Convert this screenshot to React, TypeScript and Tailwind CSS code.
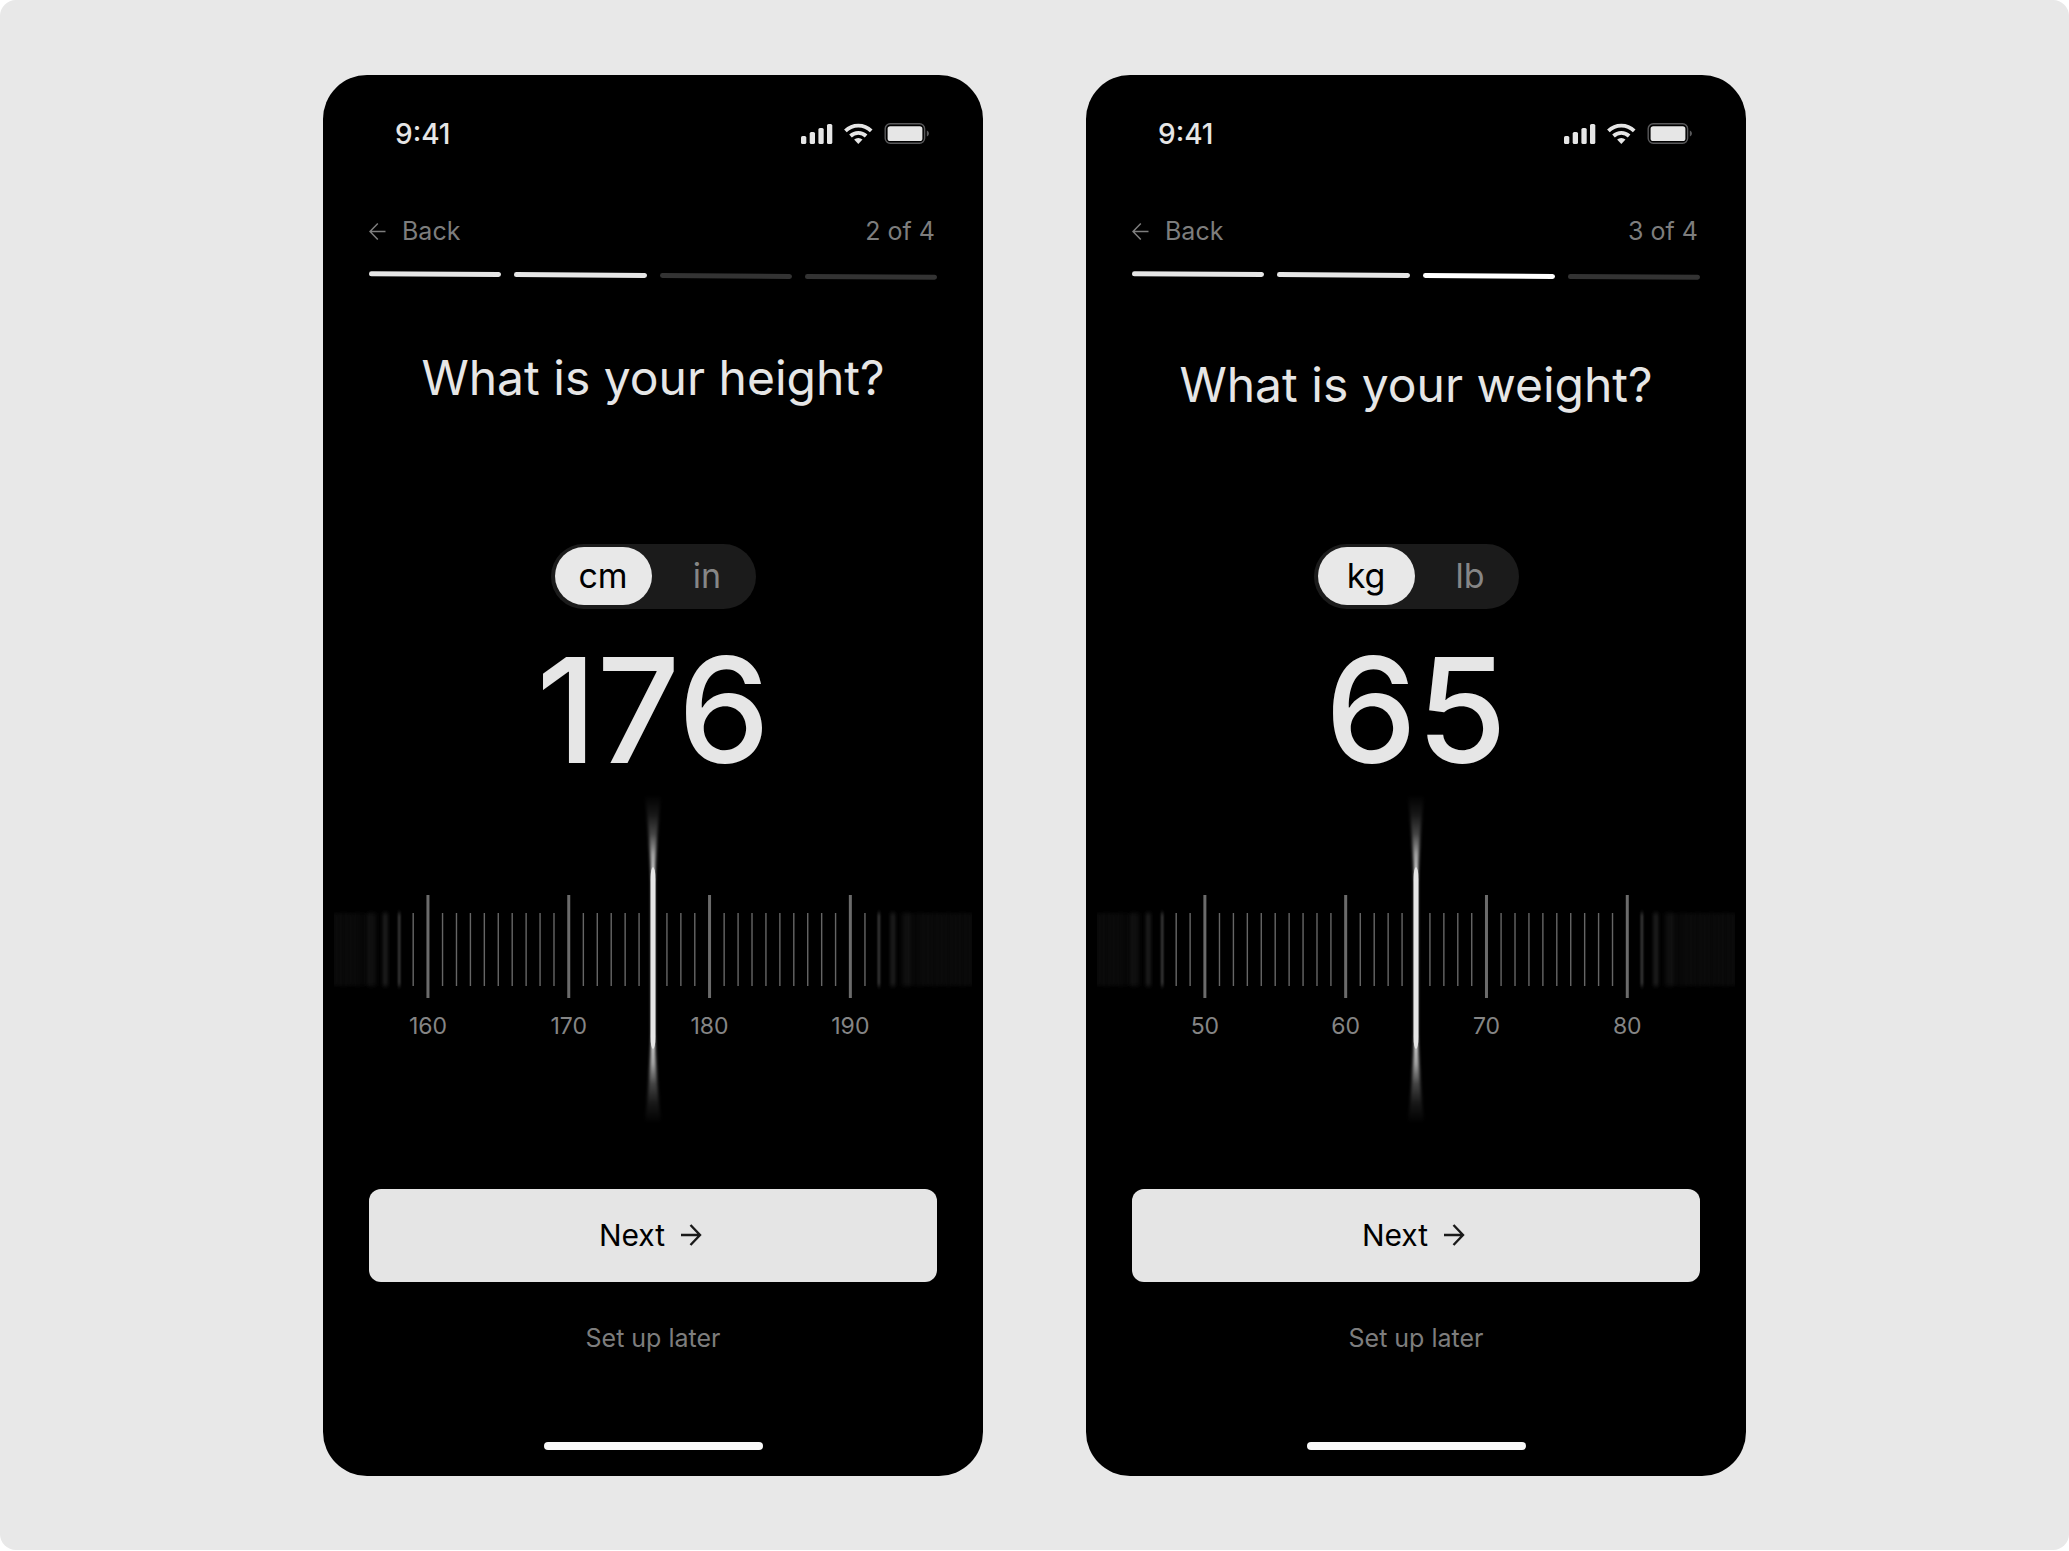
import { useState } from 'react';

interface StepProps {
  step: number;
  question: string;
  units: string[];
  initialValue: number;
  min: number;
  max: number;
  headingClass: string;
}

const TOTAL_STEPS = 4;
const CENTER = 330;

// distance in px from the zero mark, the marks next to a major one sit a bit wider
const offsetOf = (v: number) => {
  const rest = v % 10;
  const base = ((v - rest) / 10) * 140.8;
  return rest === 0 ? base : base + 14.6 + 13.93 * (rest - 1);
};

function StatusBar() {
  return (
    <div className="flex items-center justify-between pt-10 pl-[72px] pr-[54px]">
      <span className="text-[28px] leading-[38px] font-medium">9:41</span>
      <svg width="128" height="22" viewBox="0 0 128 22" fill="currentColor" aria-hidden="true">
        <rect x="0" y="13" width="5.3" height="8" rx="1.6" />
        <rect x="8.7" y="9" width="5.3" height="12" rx="1.6" />
        <rect x="17.4" y="5" width="5.3" height="16" rx="1.6" />
        <rect x="26" y="1" width="5.3" height="20" rx="1.6" />
        <g fill="none" stroke="currentColor" strokeWidth="3.8">
          <path d="M44.4 7.8a18.6 18.6 0 0 1 25.8 0" />
          <path d="M49.5 13a11.4 11.4 0 0 1 15.6 0" />
        </g>
        <path d="M57.3 21l-4.2-4.4a6.4 6.4 0 0 1 8.4 0z" />
        <rect x="84.2" y="0.8" width="39.4" height="19.4" rx="5" fill="none" stroke="#59595b" strokeWidth="1.4" />
        <rect x="86.6" y="3.2" width="34.8" height="14.8" rx="2.6" />
        <path d="M125.8 7.6c2.8 1.2 2.8 4.8 0 6z" fill="#59595b" />
      </svg>
    </div>
  );
}

function Ruler({ id, value, min, max, onChange, label }: {
  id: string;
  value: number;
  min: number;
  max: number;
  onChange: (v: number) => void;
  label: string;
}) {
  const ticks = [];
  for (let v = value - 26; v <= value + 26; v++) {
    ticks.push({ v, x: CENTER + offsetOf(v) - offsetOf(value), major: v % 10 === 0 });
  }

  // the outer ticks get blurrier the closer they are to the edge, the right fade starts earlier
  const blurOf = (x: number) => {
    const d = x < CENTER ? CENTER - x : x - CENTER + 22;
    if (d < 242) return undefined;
    if (d < 256) return `url(#${id}-b1)`;
    if (d < 270) return `url(#${id}-b2)`;
    if (d < 284) return `url(#${id}-b3)`;
    return `url(#${id}-b4)`;
  };

  return (
    <div className="relative">
      <svg viewBox="0 0 660 340" className="block w-full" aria-hidden="true">
        <defs>
          {[1.3, 2.2, 3.5, 7].map((s, i) => (
            <filter key={s} id={`${id}-b${i + 1}`} filterUnits="userSpaceOnUse" x="-60" y="90" width="780" height="140">
              <feGaussianBlur stdDeviation={`${s} 2`} />
            </filter>
          ))}
          <clipPath id={`${id}-clip`}>
            <rect x="11" y="0" width="638" height="340" />
          </clipPath>
          <linearGradient id={`${id}-glow`} x1="0" y1="0" x2="0" y2="1">
            <stop offset="0" stopColor="#e6e6e6" stopOpacity="0" />
            <stop offset="0.06" stopColor="#e6e6e6" stopOpacity="0.1" />
            <stop offset="0.12" stopColor="#e6e6e6" stopOpacity="0.3" />
            <stop offset="0.18" stopColor="#e6e6e6" stopOpacity="0.7" />
            <stop offset="0.24" stopColor="#e6e6e6" stopOpacity="1" />
            <stop offset="0.76" stopColor="#e6e6e6" stopOpacity="1" />
            <stop offset="0.82" stopColor="#e6e6e6" stopOpacity="0.7" />
            <stop offset="0.88" stopColor="#e6e6e6" stopOpacity="0.3" />
            <stop offset="0.94" stopColor="#e6e6e6" stopOpacity="0.1" />
            <stop offset="1" stopColor="#e6e6e6" stopOpacity="0" />
          </linearGradient>
          <filter id={`${id}-soft`} filterUnits="userSpaceOnUse" x="300" y="0" width="60" height="340">
            <feGaussianBlur stdDeviation="1.5 1" />
          </filter>
        </defs>

        <g clipPath={`url(#${id}-clip)`}>
          {ticks.map((t) => (
            <rect
              key={t.v}
              x={t.x - (t.major ? 1.5 : 0.7)}
              y={t.major ? 104 : 122}
              width={t.major ? 3 : 1.4}
              height={t.major ? 103 : 73}
              fill={t.major ? '#6b6b6b' : '#666666'}
              filter={blurOf(t.x)}
            />
          ))}
        </g>

        {ticks.filter((t) => t.major && Math.abs(t.x - CENTER) < 250).map((t) => (
          <text key={t.v} x={t.x} y="243" textAnchor="middle" fill="#858585" className="text-[23px]">
            {t.v}
          </text>
        ))}

        {/* Needle, a flare fading out above and below the solid line */}
        <path
          d="M322 4H338Q333 50 331.5 92V242Q333 286 338 332H322Q327 286 328.5 242V92Q327 50 322 4Z"
          fill={`url(#${id}-glow)`}
          filter={`url(#${id}-soft)`}
        />
        <rect x="327.5" y="76" width="5" height="182" rx="2.5" ry="12" fill="#e6e6e6" />
      </svg>
      <input
        type="range"
        aria-label={label}
        min={min}
        max={max}
        value={value}
        onChange={(e) => onChange(Number(e.target.value))}
        className="absolute inset-0 w-full h-full opacity-0 cursor-pointer"
      />
    </div>
  );
}

function StepScreen({ step, question, units, initialValue, min, max, headingClass }: StepProps) {
  const [unit, setUnit] = useState(units[0]);
  const [value, setValue] = useState(initialValue);

  return (
    <section className="flex flex-col flex-1 max-w-[660px] bg-black rounded-[44px] text-[#e6e6e6] overflow-hidden">
      <StatusBar />

      {/* Step header */}
      <header className="px-[46px] pt-[62px]">
        <div className="flex items-center justify-between text-[25px] leading-8 text-[#7d7d7d]">
          <button type="button" className="flex items-center gap-4 cursor-pointer">
            <svg width="17" height="18" viewBox="0 0 17 18" fill="none" stroke="currentColor" strokeWidth="1.5" aria-hidden="true">
              <path d="M16.5 9.5H1M8.8 1.5L1 9.5l7.8 8" />
            </svg>
            Back
          </button>
          <span className="pr-[2px]">{step} of {TOTAL_STEPS}</span>
        </div>
        <div className="grid grid-cols-4 gap-[13px] mt-[26px] rotate-[0.37deg]">
          {Array.from({ length: TOTAL_STEPS }, (_, i) => (
            <div
              key={i}
              className={`h-[5px] rounded-full ${i >= step ? 'bg-[#333333]' : i === 2 ? 'bg-white' : 'bg-[#e6e6e6]'}`}
            />
          ))}
        </div>
      </header>

      <div className={headingClass}>
        <h1 className="text-center text-[48px] leading-[60px]">{question}</h1>
      </div>

      {/* Unit toggle */}
      <fieldset
        aria-label="Unit"
        className="flex self-center gap-[7px] w-[205px] h-[65px] py-[3px] pl-1 rounded-full bg-[#1b1b1b]"
      >
        {units.map((u) => (
          <label
            key={u}
            className={`relative flex items-center justify-center w-[97px] h-[58px] rounded-full text-[34px] leading-10 cursor-pointer ${
              unit === u ? 'bg-[#e8e8e8] text-black' : 'text-[#868686]'
            }`}
          >
            <input
              type="radio"
              name={`unit-${step}`}
              value={u}
              checked={unit === u}
              onChange={() => setUnit(u)}
              className="absolute inset-0 w-full h-full opacity-0 cursor-pointer"
            />
            {u}
          </label>
        ))}
      </fieldset>

      <output className="mt-[29px] text-center text-[146px] leading-[144px] font-medium">{value}</output>

      <div className="mt-[9px]">
        <Ruler id={`ruler-${step}`} value={value} min={min} max={max} onChange={setValue} label={question} />
      </div>

      {/* Actions */}
      <div className="flex flex-col items-center px-[46px] pt-[58px] pb-[26px]">
        <button
          type="button"
          className="flex items-center justify-center gap-4 w-full h-[93px] pr-[5px] rounded-xl bg-[#e5e5e5] text-black text-[30px] leading-10 cursor-pointer"
        >
          Next
          <svg width="21" height="24" viewBox="0 0 21 24" fill="none" stroke="#1a1a1a" strokeWidth="2.4" aria-hidden="true">
            <path d="M0 12H19M9.5 2L19 12l-9.5 10" />
          </svg>
        </button>
        <button type="button" className="mt-10 text-[25px] leading-8 text-[#7d7d7d] cursor-pointer">
          Set up later
        </button>
        <div className="mt-[88px] w-[219px] h-2 rounded-full bg-[#f8f8f8]" />
      </div>
    </section>
  );
}

export default function App() {
  return (
    <div className="min-h-screen pb-px bg-white">
      <main className="flex items-center justify-center gap-[103px] min-h-[calc(100vh-1px)] px-8 py-[74px] rounded-2xl bg-[#e8e8e8] font-['Inter',sans-serif]">
        <StepScreen
          step={2}
          question="What is your height?"
          units={['cm', 'in']}
          initialValue={176}
          min={120}
          max={220}
          headingClass="pt-[70px] pb-[136px]"
        />
        <StepScreen
          step={3}
          question="What is your weight?"
          units={['kg', 'lb']}
          initialValue={65}
          min={30}
          max={180}
          headingClass="pt-[77px] pb-[129px]"
        />
      </main>
    </div>
  );
}
